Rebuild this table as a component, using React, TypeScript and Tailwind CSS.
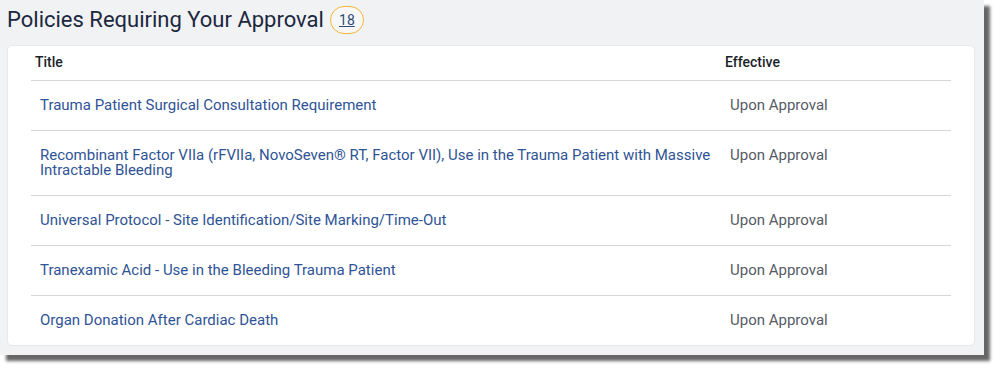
import React from "react";

const policies = [
  { title: "Trauma Patient Surgical Consultation Requirement", effective: "Upon Approval" },
  {
    title:
      "Recombinant Factor VIIa (rFVIIa, NovoSeven® RT, Factor VII), Use in the Trauma Patient with Massive Intractable Bleeding",
    effective: "Upon Approval",
  },
  { title: "Universal Protocol - Site Identification/Site Marking/Time-Out", effective: "Upon Approval" },
  { title: "Tranexamic Acid - Use in the Bleeding Trauma Patient", effective: "Upon Approval" },
  { title: "Organ Donation After Cardiac Death", effective: "Upon Approval" },
];

const App: React.FC = () => {
  return (
    <div className="w-[1000px] h-[370px] bg-white font-['Roboto',sans-serif]">
      <div className="w-[984px] h-[355px] bg-[#f1f2f4] shadow-[6px_6px_3px_rgba(0,0,0,0.6)] px-[7px]">
        {/* Heading */}
        <div className="flex items-center h-[45px] pb-[5px]">
          <h1 className="text-[22px] text-[#1c2740] leading-none">Policies Requiring Your Approval</h1>
          <span className="ml-[6px] flex items-center justify-center w-[34px] h-[28px] rounded-full border border-[#f5b63a] bg-[#f7f7f7] text-[14px] text-[#2d4a7a] underline">
            18
          </span>
        </div>

        {/* Table card */}
        <div className="w-[968px] h-[301px] bg-white rounded-[5px] border border-[#e6e8eb] px-[23px]">
          <div className="grid grid-cols-[690px_1fr] border-b border-[#d4d6d9] text-[14px] font-medium text-[#1b1f2a] leading-[15px]">
            <div className="pl-[4px] pt-[9px] pb-[10px]">Title</div>
            <div className="pl-[4px] pt-[9px] pb-[10px]">Effective</div>
          </div>
          {policies.map((p, i) => (
            <div
              key={p.title}
              className={
                "grid grid-cols-[690px_1fr] text-[15px] leading-[15px] " +
                (i < policies.length - 1 ? "border-b border-[#d4d6d9]" : "")
              }
            >
              <div className="pl-[9px] py-[17px] text-[#2f5496]">{p.title}</div>
              <div className="px-[9px] py-[17px] text-[#565b66]">{p.effective}</div>
            </div>
          ))}
        </div>
      </div>
    </div>
  );
};

export default App;
